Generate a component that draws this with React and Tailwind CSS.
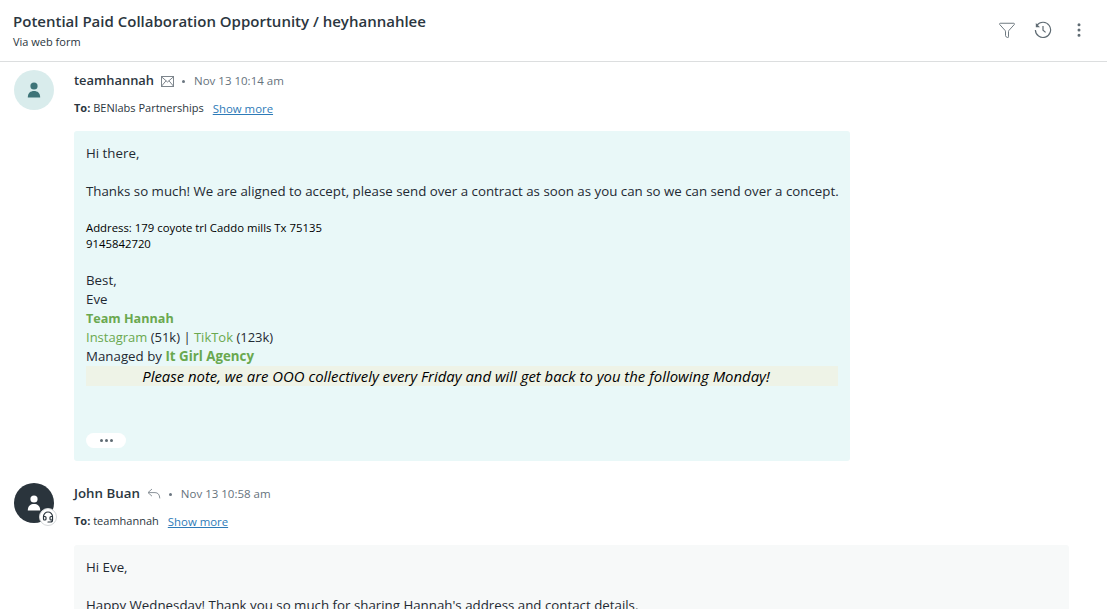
import { Filter, EllipsisVertical, Headset } from "lucide-react";

const font = "font-['Open_Sans','Noto_Sans',sans-serif]";

function HistoryIcon() {
  return (
    <svg width="18" height="18" viewBox="0 0 18 18" fill="none" stroke="#5f6b73" strokeWidth="1.2">
      <path d="M3 4.2A7.6 7.6 0 1 1 1.4 9" />
      <path d="M1.8 2v4.2H6z" fill="#5f6b73" stroke="none" />
      <path d="M9 5v4.2l2.6 2.2" />
    </svg>
  );
}

function MailIcon() {
  return (
    <svg width="13" height="11" viewBox="0 0 13 11" fill="none" stroke="#7d858c" strokeWidth="1">
      <rect x="0.5" y="0.5" width="12" height="10" />
      <path d="M0.5 0.8L6.5 6l6-5.2M0.5 10.2L5 4.8M12.5 10.2L8 4.8" />
    </svg>
  );
}

function ReplyIcon() {
  return (
    <svg width="14" height="12" viewBox="0 0 14 12" fill="none" stroke="#8a9299" strokeWidth="1">
      <path d="M5 1L1 4.6l4 3.6" />
      <path d="M1 4.6h7c3 0 4.6 2 4.8 5.8" />
    </svg>
  );
}

function MessageHead({ name, nameClass, icon, time, to }) {
  return (
    <div className="flex flex-col">
      <div className="flex items-center h-5 mt-[1px]">
        <span className={`font-semibold text-[#2b3640] ${nameClass}`}>{name}</span>
        <span className="ml-[7px] flex items-center">{icon}</span>
        <span className="ml-[8px] mr-[9px] w-[3px] h-[3px] rounded-full bg-[#6b7680]" />
        <span className="text-[11.5px] text-[#66727c]">{time}</span>
      </div>
      <div className="flex items-center h-5 mt-[7px]">
        <span className="text-[11px] text-[#2b3640]">
          <b className="font-bold">To:</b> {to}
        </span>
        <a className="ml-[9px] mt-[2px] text-[11.4px] text-[#2e7bb8] underline">Show more</a>
      </div>
    </div>
  );
}

export default function App() {
  return (
    <div className={`w-[1107px] h-[609px] overflow-hidden bg-white ${font}`}>
      <header className="h-[62px] border-b border-[#dcdedf] flex justify-between pl-[13px] pr-[19px]">
        <div className="pt-[10px]">
          <h1 className="text-[15px] leading-[22px] font-semibold text-[#2b3640]">
            Potential Paid Collaboration Opportunity / heyhannahlee
          </h1>
          <p className="text-[11px] leading-[16px] mt-[2px] text-[#2b3640]">Via web form</p>
        </div>
        <div className="flex items-center gap-[18px] pb-[2px] text-[#5f6b73]">
          <Filter size={18} strokeWidth={1.2} />
          <HistoryIcon />
          <EllipsisVertical size={18} strokeWidth={2} />
        </div>
      </header>

      <section className="flex pl-[14px] pt-[8px]">
        <div className="w-10 h-10 rounded-full bg-[#d9ecec] flex items-center justify-center shrink-0">
          <svg width="14" height="16" viewBox="0 0 14 16" fill="#3e7478">
            <circle cx="7" cy="4" r="3.6" />
            <path d="M0.8 15.5C0.8 11 3.5 9 7 9s6.2 2 6.2 6.5z" />
          </svg>
        </div>
        <div className="ml-5 w-[776px]">
          <MessageHead
            name="teamhannah"
            nameClass="text-[12.9px]"
            icon={<MailIcon />}
            time="Nov 13 10:14 am"
            to="BENlabs Partnerships"
          />
          <div className="mt-[13px] h-[330px] bg-[#e9f8f8] rounded-[3px] pl-[12px] pr-[8px] pt-[13px] text-[13.3px] leading-[19px] text-[#1f2a33]">
            <p>Hi there,</p>
            <p className="mt-[19px]">
              Thanks so much! We are aligned to accept, please send over a contract as soon as you can so we can send over a concept.
            </p>
            <p className="mt-[19px] text-[11.35px] leading-[16px] text-black">Address: 179 coyote trl Caddo mills Tx 75135</p>
            <p className="text-[11.35px] leading-[16px] text-black">9145842720</p>
            <p className="mt-[19px]">Best,</p>
            <p>Eve</p>
            <p className="font-bold text-[12.6px] text-[#6aa84f]">Team Hannah</p>
            <p className="text-[13px]">
              <span className="text-[#6aa84f]">Instagram</span> (51k) | <span className="text-[#6aa84f]">TikTok</span> (123k)
            </p>
            <p>
              Managed by <span className="font-bold text-[#6aa84f]">It Girl Agency</span>
            </p>
            <p className="h-[20px] mr-[4px] pr-[12px] bg-[#eef3e7] text-center italic text-[14.9px] leading-[20px] text-black">
              Please note, we are OOO collectively every Friday and will get back to you the following Monday!
            </p>
            <div className="mt-[47px] w-10 h-[15px] bg-white rounded-full flex items-center justify-center gap-[2px]">
              <span className="w-[3px] h-[3px] rounded-full bg-[#5f6b73]" />
              <span className="w-[3px] h-[3px] rounded-full bg-[#5f6b73]" />
              <span className="w-[3px] h-[3px] rounded-full bg-[#5f6b73]" />
            </div>
          </div>
        </div>
      </section>

      <section className="flex pl-[14px] pt-[22px]">
        <div className="relative w-10 h-10 rounded-full bg-[#2a343c] flex items-center justify-center shrink-0">
          <svg width="14" height="16" viewBox="0 0 14 16" fill="#fff">
            <circle cx="7" cy="4" r="3.6" />
            <path d="M0.8 15.5C0.8 11 3.5 9 7 9s6.2 2 6.2 6.5z" />
          </svg>
          <span className="absolute right-[-3px] bottom-[-3px] w-[18px] h-[18px] rounded-full bg-white border border-[#d5d8da] flex items-center justify-center text-[#2a343c]">
            <Headset size={12} strokeWidth={2.4} />
          </span>
        </div>
        <div className="ml-5 w-[995px]">
          <MessageHead
            name="John Buan"
            nameClass="text-[13.3px]"
            icon={<ReplyIcon />}
            time="Nov 13 10:58 am"
            to="teamhannah"
          />
          <div className="mt-[14px] bg-[#f7f9f9] rounded-[3px] px-[12px] pt-[13px] h-[100px] text-[13.3px] leading-[19px] text-[#1f2a33]">
            <p>Hi Eve,</p>
            <p className="mt-[19px]">Happy Wednesday! Thank you so much for sharing Hannah's address and contact details.</p>
          </div>
        </div>
      </section>
    </div>
  );
}
